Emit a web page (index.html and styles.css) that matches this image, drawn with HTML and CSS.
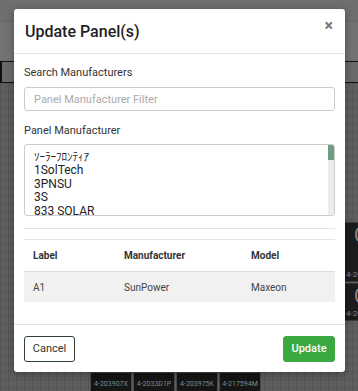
FILE: index.html
```html
<!DOCTYPE html>
<html>
<head>
<meta charset="utf-8">
<link rel="stylesheet" href="styles.css">
</head>
<body>
<div class="app">
  <div class="app-top"></div>
  <div class="app-band"></div>
  <div class="app-toolbar"><span class="tool-box"><svg width="10" height="10" viewBox="0 0 10 10"><path d="M8 3A4 4 0 1 0 8.5 6" fill="none" stroke="#222" stroke-width="1"/></svg></span></div>
  <div class="app-grid">
    <div class="side-panel p1"><span class="big">C</span><span class="tiny">4-20</span></div>
    <div class="side-panel p2"><span class="big">C</span><span class="tiny">4-20</span></div>
    <div class="cells">
      <div class="cell">4-203907X</div>
      <div class="cell">4-2033D1P</div>
      <div class="cell">4-203975K</div>
      <div class="cell">4-217594M</div>
    </div>
  </div>
</div>
<div class="modal">
  <div class="modal-header">
    <h1 class="modal-title">Update Panel(s)</h1>
    <span class="close">×</span>
  </div>
  <div class="modal-body">
    <label class="field-label">Search Manufacturers</label>
    <input class="field-input" type="text" placeholder="Panel Manufacturer Filter">
    <label class="field-label second">Panel Manufacturer</label>
    <div class="list">
      <div class="list-items">
        <div class="item jp">ｿｰﾗｰﾌﾛﾝﾃｨｱ</div>
        <div class="item">1SolTech</div>
        <div class="item">3PNSU</div>
        <div class="item">3S</div>
        <div class="item">833 SOLAR</div>
      </div>
      <div class="scrollbar"><div class="thumb"></div></div>
    </div>
    <hr class="sep">
    <table class="tbl">
      <thead><tr><th class="c1">Label</th><th class="c2">Manufacturer</th><th class="c3">Model</th></tr></thead>
      <tbody><tr><td>A1</td><td>SunPower</td><td>Maxeon</td></tr></tbody>
    </table>
  </div>
  <div class="modal-footer">
    <button class="btn btn-cancel">Cancel</button>
    <button class="btn btn-update">Update</button>
  </div>
</div>
</body>
</html>
```
FILE: styles.css
```css
html, body { margin: 0; padding: 0; }
body {
  width: 358px; height: 391px; overflow: hidden; position: relative;
  font-family: Roboto, "Noto Sans CJK JP", sans-serif;
  background: #6f6f6f;
}
.app { position: absolute; inset: 0; display: flex; flex-direction: column; }
.app-top { height: 21px; background: #6f6f6f; }
.app-band { height: 39px; background: #737373; border-top: 1px solid #676767; }
.app-toolbar { height: 20px; background: #6a6a6a; border-top: 1px solid #111; border-bottom: 1px solid #111; display: flex; }
.tool-box { width: 12px; height: 20px; border-left: 2px solid #111; border-right: 2px solid #111; display: flex; align-items: center; justify-content: center; }
.tool-box svg { margin-left: 16px; }
.app-grid {
  flex: 1; position: relative;
  background-color: #5f5f5f;
  background-image:
    linear-gradient(#555 1px, transparent 1px),
    linear-gradient(90deg, #555 1px, transparent 1px);
  background-size: 8px 8px;
}
.side-panel { position: absolute; left: 340px; width: 30px; background: #1c1c1c; border: 1px solid #3a3a3a; color: #777; overflow: hidden; }
.side-panel .big { position: absolute; left: 13px; top: 0; font-size: 20px; color: #888; }
.side-panel .tiny { position: absolute; left: 5px; bottom: 2px; font-size: 8px; color: #888; }
.p1 { top: 139px; height: 58px; }
.p2 { top: 200px; height: 36px; }
.cells { position: absolute; left: 90px; top: 289px; display: flex; gap: 1px; }
.cell { width: 40px; height: 22px; background: #151515; border: 1px solid #4a4a4a; color: #888; font-size: 7px; display: flex; align-items: center; justify-content: center; overflow: hidden; white-space: nowrap; }

.modal {
  position: absolute; left: 14px; top: 9px; width: 331px; height: 363px;
  background: #fff; border-radius: 3px;
  box-shadow: 0 2px 8px rgba(0,0,0,0.35);
  display: flex; flex-direction: column;
  color: #333;
}
.modal-header {
  height: 44px; border-bottom: 1px solid #e3e3e3;
  display: flex; align-items: center; justify-content: space-between;
  padding: 0 12px 0 11px;
}
.modal-title { margin: 0; font-size: 16px; font-weight: 500; color: #222; margin-top: 1px; }
.close { font-size: 16px; font-weight: 700; color: #777; line-height: 1; margin-top: -10px; }
.modal-body { flex: 1; padding: 10px 10px 0 10px; display: flex; flex-direction: column; }
.field-label { font-size: 11px; color: #333; line-height: 18px; height: 18px; }
.field-label.second { margin-top: 11px; }
.field-input {
  margin-top: 5px; height: 24px; box-sizing: border-box; width: 100%;
  border: 1px solid #ccc; border-radius: 3px; padding: 0 9px;
  font-family: Roboto, sans-serif; font-size: 11px; color: #333;
}
.field-input::placeholder { color: #aaa; }
.list {
  margin-top: 4px; height: 72px; box-sizing: border-box;
  border: 1px solid #ccc; border-radius: 3px; overflow: hidden;
  display: flex;
}
.list-items { flex: 1; padding: 3px 9px 0; font-size: 12px; color: #222; }
.item { height: 13.5px; line-height: 13.5px; white-space: nowrap; }
.item.jp { font-family: "Noto Sans CJK JP", sans-serif; font-size: 11px; height: 16px; line-height: 16px; }
.scrollbar { width: 6px; background: #ececec; }
.thumb { height: 15px; background: #6e9b84; }
.sep { margin: 12px 0 0; border: 0; border-top: 1px solid #e3e3e3; height: 0; }
.tbl { margin-top: 10px; width: 100%; border-collapse: collapse; font-size: 10px; border-top: 1px solid #e3e3e3; }
.tbl th { text-align: left; font-weight: 700; color: #333; height: 31px; padding: 0 0 0 9px; border-bottom: 1px solid #ddd; }
.tbl td { background: #f1f1f1; color: #444; height: 30px; padding: 0 0 0 9px; }
.tbl .c1 { width: 82px; }
.tbl .c2 { width: 118px; }
.modal-footer {
  height: 47px; border-top: 1px solid #e3e3e3;
  display: flex; align-items: center; justify-content: space-between;
  padding: 0 10px;
}
.btn { font-family: Roboto, sans-serif; font-size: 11px; height: 26px; border-radius: 3px; cursor: pointer; }
.btn-cancel { width: 51px; background: #fff; border: 1px solid #2f3f39; color: #333; }
.btn-update { width: 52px; background: #3ba842; border: 1px solid #3ba842; color: #fff; font-weight: 500; }
```
